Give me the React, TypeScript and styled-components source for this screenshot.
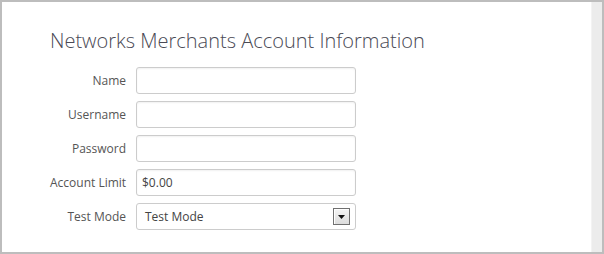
import React from 'react';
import styled, { createGlobalStyle } from 'styled-components';

const GlobalStyle = createGlobalStyle`
  html, body {
    margin: 0;
    padding: 0;
    background: #ffffff;
  }
  * {
    box-sizing: border-box;
  }
`;

const Frame = styled.div`
  display: flex;
  width: 604px;
  height: 254px;
  border: 2px solid #bdbdbd;
  background: #ffffff;
  font-family: 'Open Sans', 'DejaVu Sans', sans-serif;
`;

const Content = styled.div`
  flex: 1;
  padding: 25px 0 0 48px;
`;

const ScrollTrack = styled.div`
  width: 11px;
  background: #ececec;
  border-left: 1px solid #f3f3f3;
`;

const Title = styled.h1`
  margin: 0 0 13px;
  font-size: 20px;
  line-height: 27px;
  font-weight: 300;
  color: #4a4a55;
`;

const Form = styled.div`
  display: grid;
  grid-template-columns: 76px 220px;
  column-gap: 10px;
  row-gap: 7px;
  align-items: center;
`;

const Label = styled.label`
  text-align: right;
  font-size: 12px;
  color: #555555;
  white-space: nowrap;
`;

const TextInput = styled.input`
  width: 220px;
  height: 27px;
  padding: 0 5px;
  border: 1px solid #cccccc;
  border-radius: 3px;
  box-shadow: inset 0 1px 2px rgba(0, 0, 0, 0.06);
  font-family: 'Open Sans', 'DejaVu Sans', sans-serif;
  font-size: 12px;
  color: #444444;
  outline: none;
`;

const SelectBox = styled.div`
  display: flex;
  align-items: center;
  justify-content: space-between;
  width: 220px;
  height: 27px;
  padding: 0 5px 0 8px;
  border: 1px solid #cccccc;
  border-radius: 3px;
  font-size: 12px;
  color: #444444;
`;

const ArrowButton = styled.div`
  display: flex;
  align-items: center;
  justify-content: center;
  width: 17px;
  height: 17px;
  border: 1px solid #707070;
  background: linear-gradient(#f4f4f4, #dcdcdc);
  box-shadow: inset 1px 1px 0 #ffffff;
`;

const fields = [
  { label: 'Name', value: '' },
  { label: 'Username', value: '' },
  { label: 'Password', value: '' },
  { label: 'Account Limit', value: '$0.00' }
];

export default function App() {
  return (
    <>
      <GlobalStyle />
      <Frame>
        <Content>
          <Title>Networks Merchants Account Information</Title>
          <Form>
            {fields.map((f) => (
              <React.Fragment key={f.label}>
                <Label>{f.label}</Label>
                <TextInput defaultValue={f.value} type="text" />
              </React.Fragment>
            ))}
            <Label>Test Mode</Label>
            <SelectBox>
              <span>Test Mode</span>
              <ArrowButton>
                <svg width="7" height="4" viewBox="0 0 7 4">
                  <path d="M0 0h7L3.5 4z" fill="#111" />
                </svg>
              </ArrowButton>
            </SelectBox>
          </Form>
        </Content>
        <ScrollTrack />
      </Frame>
    </>
  );
}
